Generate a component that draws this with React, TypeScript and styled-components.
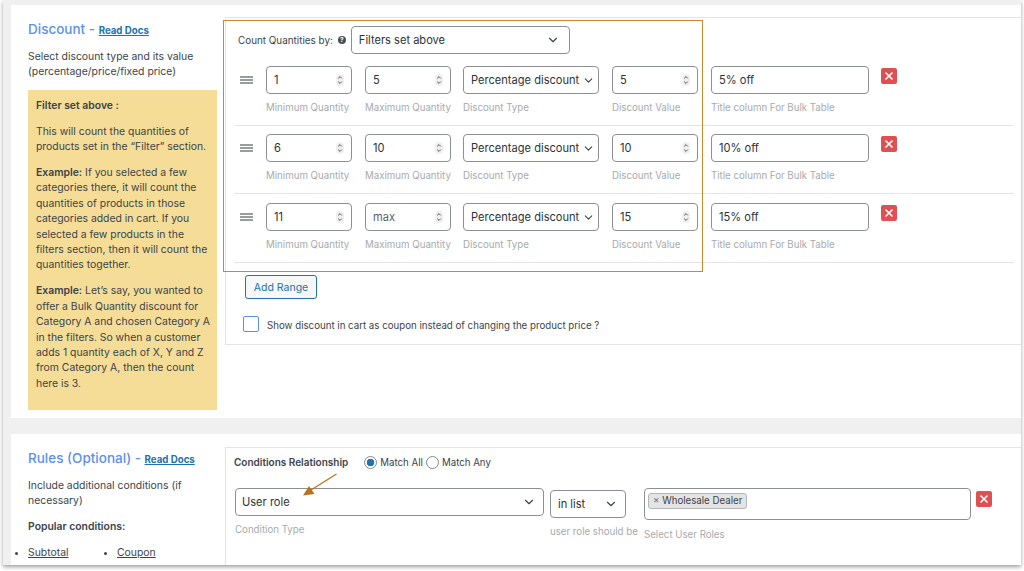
import React from "react";
import { ChevronDown, X } from "lucide-react";
import styled, { createGlobalStyle } from "styled-components";

const GlobalStyle = createGlobalStyle`
  html, body {
    margin: 0;
    height: 571px;
    overflow: hidden;
    background: #ffffff;
    font-family: Inter, "Liberation Sans", sans-serif;
    color: #3c434a;
    font-size: 10.4px;
  }
`;

const ranges = [
  { min: "1", max: "5", value: "5", title: "5% off" },
  { min: "6", max: "10", value: "10", title: "10% off" },
  { min: "11", max: "max", value: "15", title: "15% off", muted: true },
];

function Spinner() {
  return (
    <SpinnerIcon viewBox="0 0 8 12" width="8" height="12">
      <rect x="0" y="0" width="8" height="12" rx="4" fill="#efefef" />
      <path d="M2.2 4.4 4 2.6l1.8 1.8M2.2 7.6 4 9.4l1.8-1.8" fill="none" stroke="#444" strokeWidth="0.9" />
    </SpinnerIcon>
  );
}

function DeleteButton() {
  return (
    <Delete>
      <X size={12} strokeWidth={3.2} color="#fff" />
    </Delete>
  );
}

function DragHandle() {
  return (
    <Drag>
      <span />
      <span />
      <span />
    </Drag>
  );
}

function NumberField({ label, value, muted }: { label: string; value: string; muted?: boolean }) {
  return (
    <Column $width={86}>
      <Box>
        <BoxText $muted={muted}>{value}</BoxText>
        <Spinner />
      </Box>
      <Hint>{label}</Hint>
    </Column>
  );
}

export default function App() {
  return (
    <Screen>
      <GlobalStyle />
      <Shot>
        <Card $height={413}>
          <Side>
            <Heading>
              Discount - <DocsLink>Read Docs</DocsLink>
            </Heading>
            <Para>
              Select discount type and its value
              <br />
              (percentage/price/fixed price)
            </Para>
            <Note>
              <NoteBlock>
                <b>Filter set above :</b>
              </NoteBlock>
              <NoteBlock>
                This will count the quantities of
                <br />
                products set in the “Filter” section.
              </NoteBlock>
              <NoteBlock>
                <b>Example:</b> If you selected a few
                <br />
                categories there, it will count the
                <br />
                quantities of products in those
                <br />
                categories added in cart. If you
                <br />
                selected a few products in the
                <br />
                filters section, then it will count the
                <br />
                quantities together.
              </NoteBlock>
              <NoteBlock>
                <b>Example:</b> Let’s say, you wanted to
                <br />
                offer a Bulk Quantity discount for
                <br />
                Category A and chosen Category A
                <br />
                in the filters. So when a customer
                <br />
                adds 1 quantity each of X, Y and Z
                <br />
                from Category A, then the count
                <br />
                here is 3.
              </NoteBlock>
            </Note>
          </Side>
          <Panel>
            <CountRow>
              <CountLabel>Count Quantities by:</CountLabel>
              <HelpDot>?</HelpDot>
              <SelectBox $width={219}>
                <BoxText>Filters set above</BoxText>
                <ChevronDown size={14} color="#3c434a" />
              </SelectBox>
            </CountRow>
            {ranges.map((r) => (
              <RangeRow key={r.min}>
                <DragHandle />
                <NumberField label="Minimum Quantity" value={r.min} />
                <NumberField label="Maximum Quantity" value={r.max} muted={r.muted} />
                <TypeColumn $width={136}>
                  <TightBox>
                    <BoxText>Percentage discount</BoxText>
                    <ChevronDown size={13} color="#3c434a" />
                  </TightBox>
                  <Hint>Discount Type</Hint>
                </TypeColumn>
                <NumberField label="Discount Value" value={r.value} />
                <Column $width={158}>
                  <Box>
                    <BoxText>{r.title}</BoxText>
                  </Box>
                  <Hint>Title column For Bulk Table</Hint>
                </Column>
                <RowDelete>
                  <DeleteButton />
                </RowDelete>
              </RangeRow>
            ))}
            <AddRange>Add Range</AddRange>
            <CouponRow>
              <Check />
              <CouponText>Show discount in cart as coupon instead of changing the product price ?</CouponText>
            </CouponRow>
          </Panel>
          <Annotation />
        </Card>
        <Card $height={131} $gap={16}>
          <Side>
            <Heading>
              Rules (Optional) - <DocsLink>Read Docs</DocsLink>
            </Heading>
            <Para>
              Include additional conditions (if
              <br />
              necessary)
            </Para>
            <PopularTitle>
              <b>Popular conditions:</b>
            </PopularTitle>
            <Links>
              <li>
                <u>Subtotal</u>
              </li>
              <li>
                <u>Coupon</u>
              </li>
            </Links>
          </Side>
          <RulesPanel>
            <RelationRow>
              <b>Conditions Relationship</b>
              <RadioGroup>
                <Radio $on />
                <RadioText>Match All</RadioText>
                <Radio />
                <span>Match Any</span>
              </RadioGroup>
            </RelationRow>
            <ConditionRow>
              <Column $width={309}>
                <RoleBox>
                  <BoxText>User role</BoxText>
                  <ChevronDown size={14} color="#3c434a" />
                </RoleBox>
                <Hint>Condition Type</Hint>
              </Column>
              <ListColumn>
                <Box>
                  <BoxText>in list</BoxText>
                  <ChevronDown size={14} color="#3c434a" />
                </Box>
                <Hint>user role should be</Hint>
              </ListColumn>
              <MultiColumn>
                <MultiBox>
                  <Chip>
                    <span>×</span> Wholesale Dealer
                  </Chip>
                </MultiBox>
                <MultiHint>Select User Roles</MultiHint>
              </MultiColumn>
              <DeleteSlot>
                <DeleteButton />
              </DeleteSlot>
            </ConditionRow>
          </RulesPanel>
          <Arrow viewBox="0 0 36 24" width="36" height="24">
            <path d="M34.5 1 9 17" stroke="#b8741a" strokeWidth="1.3" fill="none" />
            <path d="M1 22.5 7 13l5.5 8z" fill="#b8741a" />
          </Arrow>
        </Card>
      </Shot>
    </Screen>
  );
}

const Screen = styled.div`
  width: 1024px;
  height: 571px;
  overflow: hidden;
`;

const Shot = styled.div`
  width: 1018px;
  height: 565px;
  margin-left: 3px;
  padding: 5px 0 0 8px;
  box-sizing: border-box;
  background: #f0f0f0;
  box-shadow: 0 2px 4px rgba(0, 0, 0, 0.38);
  overflow: hidden;
`;

const Card = styled.div<{ $height: number; $gap?: number }>`
  position: relative;
  display: flex;
  align-items: flex-start;
  height: ${(p) => p.$height}px;
  margin-top: ${(p) => p.$gap ?? 0}px;
  background: #fff;
  overflow: hidden;
`;

const Side = styled.div`
  width: 189px;
  margin: 15px 0 0 17px;
  flex-shrink: 0;
  line-height: 15.4px;
`;

const Heading = styled.h2`
  margin: 0;
  font-size: 13.5px;
  line-height: 18px;
  font-weight: 500;
  color: #5b90ee;
  white-space: nowrap;
`;

const DocsLink = styled.a`
  font-size: 9.7px;
  font-weight: 700;
  color: #2271b1;
  text-decoration: underline;
`;

const Para = styled.p`
  margin: 9px 0 0;
`;

const PopularTitle = styled(Para)`
  margin-top: 10px;
  b {
    font-weight: 600;
  }
`;

const Note = styled.div`
  margin-top: 10px;
  height: 320px;
  padding: 8px;
  box-sizing: border-box;
  background: #f5dd97;
  white-space: nowrap;
`;

const NoteBlock = styled.p`
  margin: 0 0 10.5px;
  b {
    font-weight: 600;
  }
`;

const Panel = styled.div`
  width: 796px;
  height: 328px;
  margin: 12px 0 0 8px;
  padding: 8px 7px 0 8px;
  box-sizing: border-box;
  border: 1px solid #e4e4e4;
  border-right: 0;
  flex-shrink: 0;
`;

const CountRow = styled.div`
  display: flex;
  align-items: center;
  height: 28px;
  padding-left: 4px;
`;

const CountLabel = styled.span`
  font-size: 9.9px;
`;

const HelpDot = styled.span`
  width: 8px;
  height: 8px;
  margin: 0 5px 0 5px;
  border-radius: 50%;
  background: #4a4f55;
  color: #fff;
  font-size: 6.5px;
  font-weight: 700;
  line-height: 8px;
  text-align: center;
`;

const RangeRow = styled.div`
  display: flex;
  align-items: flex-start;
  gap: 13px;
  height: 68px;
  padding-top: 8px;
  box-sizing: border-box;
  border-bottom: 1px solid #e2e4e7;
  &:nth-child(2) {
    height: 72px;
    padding-top: 12px;
  }
  &:nth-child(4) {
    height: 69px;
    padding-top: 9px;
  }
`;

const Drag = styled.div`
  display: flex;
  flex-direction: column;
  gap: 1px;
  width: 13px;
  margin: 10px 0 0 6px;
  span {
    height: 2px;
    background: #9a9da0;
  }
`;

const Column = styled.div<{ $width: number }>`
  width: ${(p) => p.$width}px;
  flex-shrink: 0;
`;

const TypeColumn = styled(Column)`
  margin-left: -1px;
`;

const Box = styled.div`
  display: flex;
  align-items: center;
  justify-content: space-between;
  height: 28px;
  padding: 0 7px;
  box-sizing: border-box;
  border: 1px solid #8c9096;
  border-radius: 4px;
  background: #fff;
`;

const SelectBox = styled(Box)<{ $width: number }>`
  width: ${(p) => p.$width}px;
  padding-right: 9px;
`;

const TightBox = styled(Box)`
  padding-right: 3px;
`;

const RoleBox = styled(Box)`
  padding-left: 6px;
`;

const BoxText = styled.span<{ $muted?: boolean }>`
  font-size: 11.1px;
  color: ${(p) => (p.$muted ? "#5c6166" : "#2c3338")};
  white-space: nowrap;
`;

const SpinnerIcon = styled.svg`
  flex-shrink: 0;
`;

const Hint = styled.div`
  margin-top: 8px;
  font-size: 9.7px;
  line-height: 12px;
  color: #a7aaad;
  white-space: nowrap;
`;

const MultiHint = styled(Hint)`
  margin-top: 9px;
`;

const Delete = styled.div`
  display: flex;
  align-items: center;
  justify-content: center;
  width: 16px;
  height: 16px;
  margin-top: 2px;
  border-radius: 2px;
  background: #dd5152;
`;

const RowDelete = styled.div`
  margin-left: -1px;
`;

const AddRange = styled.button`
  display: block;
  width: 72px;
  height: 24px;
  margin: 12px 0 0 11px;
  padding: 0;
  border: 1px solid #2271b1;
  border-radius: 3px;
  background: #f6f7f7;
  color: #2271b1;
  font: inherit;
  font-size: 10.5px;
`;

const CouponRow = styled.label`
  display: flex;
  align-items: center;
  gap: 8px;
  margin: 17px 0 0 9px;
  font-size: 9.7px;
`;

const CouponText = styled.span`
  padding-top: 3px;
`;

const Check = styled.span`
  width: 16px;
  height: 16px;
  box-sizing: border-box;
  border: 1.5px solid #5b8fe8;
  border-radius: 2px;
`;

const Annotation = styled.div`
  position: absolute;
  left: 212px;
  top: 15px;
  width: 480px;
  height: 252px;
  box-sizing: border-box;
  border: 1px solid #c98a2c;
  pointer-events: none;
`;

const Links = styled.ul`
  display: flex;
  margin: 11px 0 0;
  padding: 0;
  list-style-position: outside;
  li {
    width: 89px;
  }
`;

const RulesPanel = styled.div`
  width: 796px;
  height: 130px;
  margin: 13px 0 0 8px;
  padding: 7px 8px 0 8px;
  box-sizing: border-box;
  border: 1px solid #e4e4e4;
  border-right: 0;
  border-bottom: 0;
  flex-shrink: 0;
`;

const RelationRow = styled.div`
  display: flex;
  align-items: center;
  height: 14px;
  font-size: 9.7px;
  white-space: nowrap;
  b {
    font-size: 10px;
    font-weight: 600;
  }
`;

const RadioGroup = styled.div`
  display: flex;
  align-items: center;
  margin-left: 16px;
`;

const Radio = styled.span<{ $on?: boolean }>`
  width: 13px;
  height: 13px;
  margin: 0 3px 0 0;
  box-sizing: border-box;
  border: 1px solid #7e8993;
  border-radius: 50%;
  background: ${(p) => (p.$on ? "radial-gradient(circle, #2271b1 0 3.5px, #fff 4px)" : "#fff")};
`;

const RadioText = styled.span`
  margin-right: 3px;
`;

const ConditionRow = styled.div`
  display: flex;
  align-items: flex-start;
  margin: 19px 0 0 1px;
`;

const ListColumn = styled.div`
  width: 76px;
  margin: 2px 0 0 6px;
  flex-shrink: 0;
`;

const MultiColumn = styled.div`
  width: 327px;
  margin-left: 18px;
  flex-shrink: 0;
`;

const MultiBox = styled.div`
  height: 32px;
  padding: 4px 3px;
  box-sizing: border-box;
  border: 1px solid #8c9096;
  border-radius: 4px;
`;

const Chip = styled.span`
  display: inline-block;
  height: 16px;
  padding: 0 4px;
  box-sizing: border-box;
  border: 1px solid #b5b5b5;
  border-radius: 3px;
  background: #e4e4e4;
  font-size: 9.7px;
  line-height: 14px;
  span {
    color: #666;
  }
`;

const DeleteSlot = styled.div`
  margin: 1px 0 0 5px;
`;

const Arrow = styled.svg`
  position: absolute;
  left: 291px;
  top: 39px;
`;
